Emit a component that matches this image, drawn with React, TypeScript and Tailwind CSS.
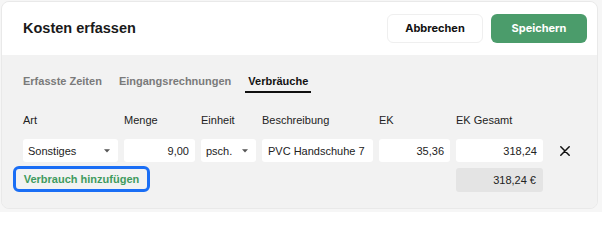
import React from "react";

const font = { fontFamily: '"Liberation Sans", Arial, sans-serif' };

const Caret = () => (
  <svg width="6" height="4" viewBox="0 0 6 4" className="shrink-0">
    <path d="M0 0.3 L6 0.3 L3 3.5 Z" fill="#555" />
  </svg>
);

const cell = "h-[23px] bg-white rounded-[3px] flex items-center";

export default function App() {
  return (
    <div className="w-[602px] h-[212px] bg-[#f6f6f6] pl-px pt-px pr-[4px] pb-[3px] flex" style={font}>
      <div className="flex-1 flex flex-col rounded-lg overflow-hidden border border-[#e9e9e9]">
        {/* header */}
        <div className="h-[53px] bg-white flex items-center justify-between pl-[21px] pr-[10px] shrink-0">
          <h1 className="text-[14.5px] leading-[17px] font-bold text-[#1a1a1a] mb-[1px]">Kosten erfassen</h1>
          <div className="flex gap-[8px] mb-[1px]">
            <button
              className="w-[96px] h-[29px] rounded-md border border-[#efefef] bg-white text-[11px] font-bold text-[#111]"
              style={{ fontFamily: "Inter, sans-serif" }}
            >
              Abbrechen
            </button>
            <button
              className="w-[96px] h-[29px] rounded-md bg-[#4b9c6b] text-[11px] font-bold text-white"
              style={{ fontFamily: "Inter, sans-serif" }}
            >
              Speichern
            </button>
          </div>
        </div>

        {/* body */}
        <div className="flex-1 bg-[#f2f2f2] pl-[21px] pr-[10px]">
          <div className="flex items-start text-[11px] leading-[14px] font-bold mt-[19px]">
            <span className="text-[#7a7a7a]">Erfasste Zeiten</span>
            <span className="text-[#7a7a7a] ml-[17px]">Eingangsrechnungen</span>
            <span className="text-[#111] ml-[14px] px-[3px] pb-[3px] border-b-2 border-[#111]">Verbräuche</span>
          </div>

          <div className="grid grid-cols-[95px_71px_55px_111px_71px_87px_auto] gap-x-[6px] text-[11px] leading-[14px] text-[#222] mt-[20px]">
            <span>Art</span>
            <span>Menge</span>
            <span>Einheit</span>
            <span>Beschreibung</span>
            <span>EK</span>
            <span>EK Gesamt</span>
            <span />

            <div className={`${cell} justify-between pl-[5px] pr-[8px] mt-[12px]`}>
              <span>Sonstiges</span>
              <Caret />
            </div>
            <div className={`${cell} justify-end pr-[6px] mt-[12px]`}>9,00</div>
            <div className={`${cell} justify-between pl-[5px] pr-[8px] mt-[12px]`}>
              <span>psch.</span>
              <Caret />
            </div>
            <div className={`${cell} pl-[6px] mt-[12px] overflow-hidden whitespace-nowrap`}>PVC Handschuhe 7</div>
            <div className={`${cell} justify-end pr-[6px] mt-[12px]`}>35,36</div>
            <div className={`${cell} justify-end pr-[6px] mt-[12px]`}>318,24</div>
            <div className="mt-[12px] h-[23px] flex items-center pl-[11px]">
              <svg width="10" height="10" viewBox="0 0 10 10">
                <path d="M0.8 0.8 L9.2 9.2 M9.2 0.8 L0.8 9.2" stroke="#111" strokeWidth="1.5" strokeLinecap="round" />
              </svg>
            </div>

            <div className="col-span-5 mt-[4px] flex">
              <button className="ml-[-10px] w-[137px] h-[26px] rounded-[6px] border-[3px] border-[#1a6ef5] text-[11px] font-bold text-[#3f9b5e] flex items-center justify-center whitespace-nowrap">
                Verbrauch hinzufügen
              </button>
            </div>
            <div className="mt-[6px] h-[24px] bg-[#e4e4e4] rounded-[3px] flex items-center justify-end pr-[7px]">318,24 €</div>
            <span />
          </div>
        </div>
      </div>
    </div>
  );
}
